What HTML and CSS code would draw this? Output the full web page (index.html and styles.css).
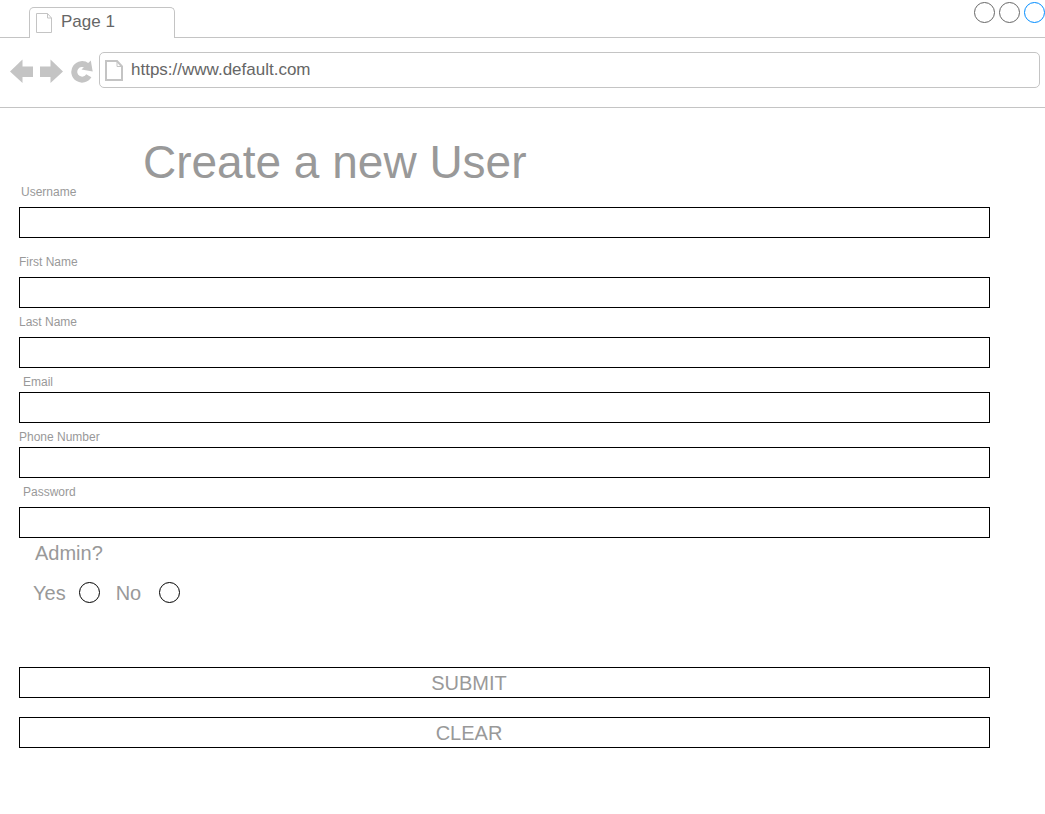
FILE: index.html
```html
<!DOCTYPE html>
<html lang="en">
<head>
<meta charset="utf-8">
<title>Create a new User</title>
<link rel="stylesheet" href="styles.css">
</head>
<body>
<header class="browser">
  <div class="tab-strip">
    <div class="strip-start"></div>
    <button class="tab" type="button">
      <svg class="tab-icon" viewBox="0 0 16 20" aria-hidden="true"><path d="M.5.5H11.5L15.5 5V19.5H.5ZM11.5.5V5H15.5"/></svg>
      <span>Page 1</span>
    </button>
    <div class="window-controls">
      <button class="window-button" type="button" aria-label="Minimize"></button>
      <button class="window-button" type="button" aria-label="Maximize"></button>
      <button class="window-button window-close" type="button" aria-label="Close"></button>
    </div>
  </div>
  <div class="toolbar">
    <button class="nav-button" type="button" aria-label="Back">
      <svg viewBox="0 0 23 24" aria-hidden="true"><path d="M0 12.500 12.500 .5V7.500H23V18H12.500V24Z"/></svg>
    </button>
    <button class="nav-button" type="button" aria-label="Forward">
      <svg viewBox="0 0 23 24" aria-hidden="true"><path d="M23 12.500 10.500 .5V7.500H0V18H10.500V24Z"/></svg>
    </button>
    <button class="nav-button" type="button" aria-label="Reload">
      <svg viewBox="0 0 23 24" aria-hidden="true"><path class="reload-ring" d="M17 6.800A7.800 7.800 0 1 0 18.800 16.800"/><path d="M20.800 1.500 22.700 12.500 11.500 10.500Z"/></svg>
    </button>
    <label class="address">
      <svg class="address-icon" viewBox="0 0 18 21" aria-hidden="true"><path d="M1 1H12L17 6.500V20H1Z"/><path class="fold" d="M12 1V6.500H17"/></svg>
      <input class="address-input" type="text" aria-label="Address" value="https://www.default.com">
    </label>
  </div>
</header>
<main class="page">
  <h1 class="title">Create a new User</h1>
  <form class="form">
    <div class="field field-spaced">
      <label class="label label-nudged" for="username">Username</label>
      <input class="box" id="username" type="text">
    </div>
    <div class="field">
      <label class="label" for="first">First Name</label>
      <input class="box" id="first" type="text">
    </div>
    <div class="field">
      <label class="label" for="last">Last Name</label>
      <input class="box" id="last" type="text">
    </div>
    <div class="field field-tight">
      <label class="label label-indented" for="email">Email</label>
      <input class="box" id="email" type="email">
    </div>
    <div class="field field-tight">
      <label class="label" for="phone">Phone Number</label>
      <input class="box" id="phone" type="tel">
    </div>
    <div class="field">
      <label class="label label-indented" for="password">Password</label>
      <input class="box" id="password" type="password">
    </div>
    <fieldset class="admin">
      <legend class="admin-title">Admin?</legend>
      <div class="choices">
        <label class="choice" for="admin-yes">Yes</label>
        <input class="radio" id="admin-yes" type="radio" name="admin">
        <label class="choice choice-no" for="admin-no">No</label>
        <input class="radio" id="admin-no" type="radio" name="admin">
      </div>
    </fieldset>
    <div class="actions">
      <button class="box action" type="submit">SUBMIT</button>
      <button class="box action" type="reset">CLEAR</button>
    </div>
  </form>
</main>
</body>
</html>
```
FILE: styles.css
```css
* {
  box-sizing: border-box;
}

body {
  margin: 0;
  background: #fff;
  color: #999;
  font-family: "Liberation Sans", Arial, sans-serif;
}

button,
input {
  margin: 0;
  padding: 0;
  border: 0;
  background: none;
  color: inherit;
  font: inherit;
}

/* Browser chrome */
.browser {
  color: #666;
  font-size: 17px;
}

.tab-strip {
  display: flex;
  height: 38px;
}

.strip-start {
  width: 29px;
  border-bottom: 1px solid #c4c4c4;
}

.tab {
  display: flex;
  align-items: flex-start;
  gap: 9px;
  width: 146px;
  margin-top: 7px;
  padding: 5px 6px 0;
  border: 1px solid #c4c4c4;
  border-bottom: 0;
  border-radius: 5px 5px 0 0;
  line-height: 18px;
}

.tab-icon {
  width: 16px;
  height: 20px;
  fill: none;
  stroke: #c4c4c4;
}

.window-controls {
  display: flex;
  flex: 1;
  justify-content: flex-end;
  gap: 4px;
  padding-top: 2px;
  border-bottom: 1px solid #c4c4c4;
}

.window-button {
  width: 21px;
  height: 21px;
  border: 1px solid #666;
  border-radius: 50%;
}

.window-close {
  border-color: #008cff;
}

.toolbar {
  display: flex;
  align-items: center;
  gap: 7px;
  padding: 14px 5px 19px 10px;
  border-bottom: 1px solid #c4c4c4;
}

.nav-button {
  display: flex;
  width: 23px;
  padding-top: 2px;
}

.nav-button svg {
  width: 23px;
  height: 24px;
  fill: #c4c4c4;
}

.nav-button .reload-ring {
  fill: none;
  stroke: #c4c4c4;
  stroke-width: 6;
}

.address {
  display: flex;
  flex: 1;
  align-items: center;
  gap: 8px;
  height: 36px;
  margin-left: -1px;
  padding: 0 5px;
  border: 1px solid #c4c4c4;
  border-radius: 5px;
}

.address-icon {
  width: 18px;
  height: 21px;
  fill: none;
  stroke: #c4c4c4;
  stroke-width: 2;
}

.address-icon .fold {
  stroke-width: 1;
}

.address-input {
  flex: 1;
  min-width: 0;
}

/* Form */
.page {
  padding: 31px 55px 24px 19px;
}

.title {
  margin: 0;
  padding-left: 124px;
  font-size: 46px;
  font-weight: 400;
  line-height: 46px;
}

.field {
  display: flex;
  flex-direction: column;
  gap: 8px;
  margin-bottom: 7px;
}

.field-spaced {
  margin-bottom: 17px;
}

.field-tight {
  gap: 3px;
}

.label {
  font-size: 12px;
  line-height: 14px;
}

.label-nudged {
  padding-left: 2px;
}

.label-indented {
  padding-left: 4px;
}

.box {
  width: 100%;
  height: 31px;
  border: 1px solid #000;
  border-radius: 0;
}

input.box {
  padding: 0 8px;
}

.admin {
  margin: -4px 0 0;
  padding: 0 14px;
  border: 0;
  font-size: 20px;
  line-height: 24px;
}

.admin-title {
  padding: 0 0 0 2px;
}

.choices {
  display: flex;
  align-items: flex-start;
  padding-top: 16px;
}

.radio {
  width: 21px;
  height: 21px;
  margin: 1px 0 0 13px;
  border: 1px solid #000;
  border-radius: 50%;
  appearance: none;
}

.radio:checked {
  background: #000;
  box-shadow: inset 0 0 0 4px #fff;
}

.choice-no {
  padding: 0 5px 0 16px;
}

.actions {
  display: flex;
  flex-direction: column;
  gap: 19px;
  padding-top: 62px;
}

.action {
  padding: 1px 71px 0 0;
  font-size: 20px;
}
```
